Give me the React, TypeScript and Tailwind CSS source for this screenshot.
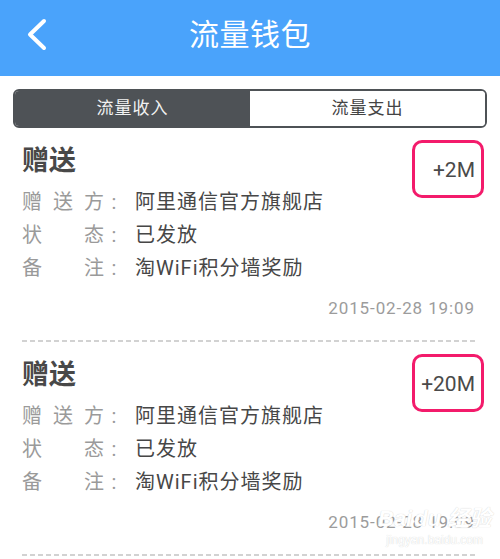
import React from "react";

const records = [
  { amount: "+2M", from: "阿里通信官方旗舰店", status: "已发放", note: "淘WiFi积分墙奖励", time: "2015-02-28 19:09" },
  { amount: "+20M", from: "阿里通信官方旗舰店", status: "已发放", note: "淘WiFi积分墙奖励", time: "2015-02-28 19:09" },
];

const Label = ({ chars }: { chars: string[] }) => {
  return (
    <div className="flex text-[#9a9a9a]">
      <span className="w-[31px]">{chars[0]}</span>
      <span className="w-[31px]">{chars[1]}</span>
      <span className="w-[20px]">{chars[2]}</span>
      <span className="flex w-[20px] justify-center font-['Roboto']">:</span>
    </div>
  );
};

const RecordCard = ({ r }: { r: (typeof records)[number] }) => {
  return (
    <li className="px-[22px] pr-[25px] pt-[16px]">
      <div className="flex h-[34px] items-start justify-between">
        <h3 className="text-[27px] leading-[34px] font-bold text-[#484848]">赠送</h3>
        <span className="relative mt-[14px] font-['Roboto'] text-[21px] leading-[24px] text-[#4a4a4a]">
          {r.amount}
          <span className="absolute top-[-18px] right-[-9px] h-[58px] w-[72px] rounded-[10px] border-[3px] border-[#f31b6b]" />
        </span>
      </div>

      <ul className="mt-[8px] text-[20px] leading-[33px]">
        <li className="flex h-[33px] items-center">
          <Label chars={["赠", "送", "方"]} />
          <p className="ml-[11px] tracking-[1px] text-[#474747]">{r.from}</p>
        </li>
        <li className="flex h-[33px] items-center">
          <Label chars={["状", "", "态"]} />
          <p className="ml-[11px] tracking-[1px] text-[#474747]">{r.status}</p>
        </li>
        <li className="flex h-[33px] items-center">
          <Label chars={["备", "", "注"]} />
          <p className="ml-[11px] tracking-[1px] text-[#474747]">{r.note}</p>
        </li>
      </ul>

      <p className="mt-[11px] text-right font-['Roboto'] text-[17px] leading-[24px] tracking-[0.9px] text-[#9c9c9c]">
        {r.time}
      </p>

      {/* dashed divider */}
      <div className="mt-[20px] h-[2px] bg-[linear-gradient(to_right,#d2d2d2_5px,transparent_5px)] bg-[length:8px_2px]" />
    </li>
  );
};

export default function App() {
  return (
    <div className="relative h-[559px] w-[500px] overflow-hidden bg-white font-['Roboto','Noto_Sans_CJK_SC',sans-serif]">
      <header className="grid h-[76px] grid-cols-[1fr_auto_1fr] items-center bg-[#4aa3fb] pb-[6px]">
        <div className="flex items-center">
          <svg width="22" height="36" viewBox="0 0 22 36" className="ml-[26px]">
            <polyline
              points="18,4 4,17.5 18,31"
              fill="none"
              stroke="#fff"
              strokeWidth="4"
              strokeLinecap="round"
              strokeLinejoin="round"
            />
          </svg>
        </div>
        <h1 className="text-[30px] leading-none tracking-[0.5px] text-white">流量钱包</h1>
        <div />
      </header>

      <div className="mx-[13px] mt-[13px] flex h-[39px] overflow-hidden rounded-[6px] border-2 border-[#4e5256]">
        <button className="flex flex-1 items-center justify-center bg-[#4e5256] text-[17px] tracking-[1px] text-[#f2f2f2]">
          流量收入
        </button>
        <button className="flex flex-1 items-center justify-center bg-white text-[17px] tracking-[1px] text-[#444]">
          流量支出
        </button>
      </div>

      <ul>
        {records.map((r, i) => (
          <RecordCard key={i} r={r} />
        ))}
      </ul>

      {/* watermark */}
      <div className="pointer-events-none absolute top-[508px] left-[378px] flex flex-col items-center font-['Liberation_Sans','Noto_Sans_CJK_SC',sans-serif] leading-none text-white [text-shadow:0_0_1px_#c8c8c8]">
        <span className="text-[22px] font-bold italic">Bai<span className="ml-[2px]">du</span> 经验</span>
        <span className="mt-[4px] text-[12px]">jingyan.baidu.com</span>
      </div>
    </div>
  );
}
